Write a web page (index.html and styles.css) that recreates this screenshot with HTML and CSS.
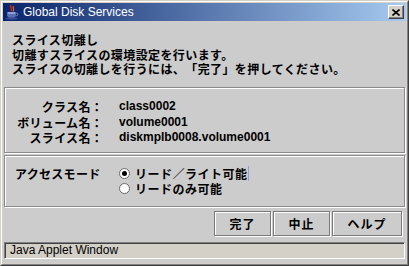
FILE: index.html
```html
<!DOCTYPE html>
<html>
<head>
    <meta charset="UTF-8">
    <link rel="stylesheet" href="styles.css">
</head>
<body>
    <div class="frame">
        <div class="frame-inner">
            <div class="titlebar">
                <svg class="app-icon" width="16" height="16" viewBox="0 0 16 16">
                    <path d="M7 1 C5 3 9 4 7 7" stroke="#d42a1c" stroke-width="1.4" fill="none"/>
                    <path d="M9.5 2 C8 4 11 5 9 7.5" stroke="#e8661a" stroke-width="1.2" fill="none"/>
                    <path d="M3 8 H12 V11 C12 13 10 14 7.5 14 C5 14 3 13 3 11 Z" fill="#5a6fb4"/>
                    <path d="M12 9 C14.5 9 14.5 12 11.5 12" stroke="#5a6fb4" stroke-width="1.2" fill="none"/>
                    <ellipse cx="7.5" cy="14.5" rx="6.5" ry="1.2" fill="#3a4d99"/>
                    <path d="M4 9 H11" stroke="#c8d2f0" stroke-width="1"/>
                </svg>
                <span class="title-text">Global Disk Services</span>
                <span class="close-btn">
                    <svg width="8" height="7" viewBox="0 0 8 7">
                        <path d="M0.5 0.5 L7.5 6.5 M7.5 0.5 L0.5 6.5" stroke="#000" stroke-width="1.6"/>
                    </svg>
                </span>
            </div>

            <div class="content">
                <div class="header">
                    <div>スライス切離し</div>
                    <div>切離すスライスの環境設定を行います。</div>
                    <div>スライスの切離しを行うには、「完了」を押してください。</div>
                </div>

                <div class="panel info-panel">
                    <div class="info-grid">
                        <span class="info-label">クラス名：</span>
                        <span class="info-value">class0002</span>
                        <span class="info-label">ボリューム名：</span>
                        <span class="info-value">volume0001</span>
                        <span class="info-label">スライス名：</span>
                        <span class="info-value">diskmplb0008.volume0001</span>
                    </div>
                </div>

                <div class="panel mode-panel">
                    <span class="mode-label">アクセスモード</span>
                    <div class="radio-group">
                        <label class="radio-item">
                            <span class="radio checked"></span>
                            <span class="radio-text focused">リード／ライト可能</span>
                        </label>
                        <label class="radio-item">
                            <span class="radio"></span>
                            <span class="radio-text">リードのみ可能</span>
                        </label>
                    </div>
                </div>

                <div class="button-row">
                    <button class="btn btn-ok">完了</button>
                    <button class="btn btn-cancel">中止</button>
                    <button class="btn btn-help">ヘルプ</button>
                </div>

                <div class="statusbar">Java Applet Window</div>
            </div>
        </div>
    </div>
</body>
</html>
```

FILE: styles.css
```css
body {
    margin: 0;
    background-color: #d4d0c8;
    font-family: "Noto Sans CJK JP", "Liberation Sans", sans-serif;
}

.frame {
    width: 409px;
    height: 266px;
    box-sizing: border-box;
    border: 1px solid;
    border-color: #d4d0c8 #404040 #404040 #d4d0c8;
}

.frame-inner {
    height: 100%;
    box-sizing: border-box;
    border: 1px solid;
    border-color: #ffffff #808080 #808080 #ffffff;
    padding: 1px;
    background-color: #d4d0c8;
    display: flex;
    flex-direction: column;
}

.titlebar {
    height: 18px;
    flex: none;
    display: flex;
    align-items: center;
    background: linear-gradient(to right, #0a246a, #a6caf0);
    padding-left: 1px;
}

.app-icon {
    flex: none;
}

.title-text {
    margin-left: 3px;
    color: #ffffff;
    font-family: "Liberation Sans", sans-serif;
    font-size: 12px;
    flex: 1;
}

.close-btn {
    width: 16px;
    height: 14px;
    box-sizing: border-box;
    margin-right: 2px;
    background-color: #d4d0c8;
    border: 1px solid;
    border-color: #ffffff #404040 #404040 #ffffff;
    box-shadow: inset -1px -1px #808080;
    display: flex;
    align-items: center;
    justify-content: center;
}

.content {
    flex: 1;
    background-color: #cccccc;
    display: flex;
    flex-direction: column;
    font-weight: bold;
    font-size: 12px;
    color: #000000;
    text-spacing-trim: space-all;
}

.header {
    padding: 12px 0 0 9px;
    line-height: 14.5px;
    letter-spacing: 0.4px;
    height: 54px;
}

.panel {
    margin: 0 1px;
    border: 1px solid #8a8a8a;
    box-shadow: inset 1px 1px #ffffff, 1px 1px #ffffff;
    flex: none;
}

.info-panel {
    height: 66px;
    box-sizing: border-box;
    padding-top: 11px;
}

.info-grid {
    display: grid;
    grid-template-columns: 98px auto;
    column-gap: 16px;
    row-gap: 0;
    line-height: 15.5px;
}

.info-label {
    text-align: right;
    letter-spacing: 0.3px;
}

.info-value {
    font-family: "Liberation Sans", sans-serif;
}

.mode-panel {
    margin-top: 2px;
    height: 52px;
    box-sizing: border-box;
    padding: 10px 0 0 10px;
    display: flex;
    line-height: 15px;
}

.mode-label {
    width: 104px;
    letter-spacing: 0.3px;
}

.radio-group {
    display: flex;
    flex-direction: column;
}

.radio-item {
    display: flex;
    align-items: center;
}

.radio {
    width: 11px;
    height: 11px;
    box-sizing: border-box;
    border-radius: 50%;
    border: 1px solid #6a6a6a;
    background-color: #ffffff;
    display: flex;
    align-items: center;
    justify-content: center;
    margin-right: 5px;
}

.radio.checked::after {
    content: "";
    width: 5px;
    height: 5px;
    border-radius: 50%;
    background-color: #000000;
}

.radio-text {
    letter-spacing: 0.5px;
}

.radio-text.focused {
    border-right: 1px solid #9a9ad0;
}

.button-row {
    display: flex;
    justify-content: flex-end;
    gap: 2px;
    margin-top: 4px;
    padding-right: 4px;
    flex: none;
}

.btn {
    height: 25px;
    margin: 0;
    padding: 0;
    font: inherit;
    letter-spacing: 1px;
    background-color: #cccccc;
    border: 1px solid #7a7a7a;
    box-shadow: inset 1px 1px #ffffff, 1px 1px #ffffff;
    color: #000000;
}

.btn-ok, .btn-cancel {
    width: 57px;
}

.btn-help {
    width: 70px;
}

.statusbar {
    margin: 6px 1px 0 1px;
    height: 17px;
    box-sizing: border-box;
    background-color: #d4d0c8;
    border: 1px solid;
    border-color: #808080 #ffffff #ffffff #808080;
    box-shadow: inset 1px 1px #404040;
    font-family: "Liberation Sans", sans-serif;
    font-weight: normal;
    font-size: 12px;
    line-height: 15px;
    padding-left: 5px;
    flex: none;
}
```
